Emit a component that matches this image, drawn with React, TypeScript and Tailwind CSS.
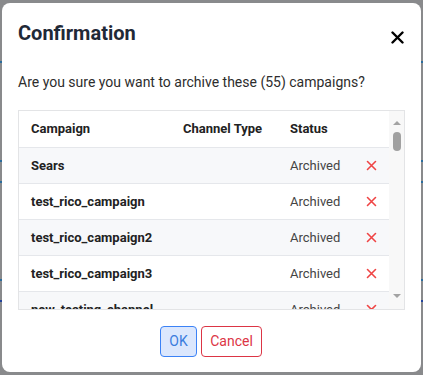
import React from 'react';

const campaigns = [
  'Sears',
  'test_rico_campaign',
  'test_rico_campaign2',
  'test_rico_campaign3',
  'new_testing_channel',
];

// Thin red x used to remove a campaign from the list
const RemoveIcon = () => (
  <svg width="11" height="11" viewBox="0 0 11 11" className="text-[#ef4444]">
    <path d="M1.5 1.5 L9.5 9.5 M9.5 1.5 L1.5 9.5" stroke="currentColor" strokeWidth="1.6" strokeLinecap="round" />
  </svg>
);

export default function App() {
  return (
    <div
      className="relative h-[375px] w-[423px] overflow-hidden bg-[#898a8c]"
      style={{ fontFamily: 'Roboto, "Liberation Sans", Arial, sans-serif' }}
    >
      {/* dimmed page behind the overlay */}
      <div className="absolute left-0 right-0 top-[61px] h-[2px] bg-[#2b6c9c]" />
      <div className="absolute left-0 right-0 top-[160px] h-[2px] bg-[#2b6c9c]" />
      <div className="absolute left-0 right-0 top-[181px] h-[2px] bg-[#2b6c9c]" />
      <div className="absolute left-0 right-0 top-[279px] h-[2px] bg-[#2b6c9c]" />
      <div className="absolute left-0 right-0 top-[300px] h-[2px] bg-[#23439a]" />

      {/* Modal */}
      <div className="absolute left-[2px] top-[3px] flex h-[369px] w-[419px] flex-col rounded-lg bg-white px-4 pt-4 pb-4">
        <div className="flex items-center justify-between">
          <h2 className="text-[20px] leading-[28px] font-bold text-[#1f2937]">Confirmation</h2>
          <button className="mt-[9px] mr-[1px] text-black">
            <svg width="13" height="13" viewBox="0 0 13 13">
              <path d="M1.5 1.5 L11.5 11.5 M11.5 1.5 L1.5 11.5" stroke="currentColor" strokeWidth="2.4" strokeLinecap="round" />
            </svg>
          </button>
        </div>

        <p className="mt-[25px] text-[14px] leading-[20px] text-[#2d2d2d]">
          Are you sure you want to archive these (55) campaigns?
        </p>

        {/* Campaign table */}
        <div className="mt-[18px] flex h-[200px] border border-[#e3e4e6]">
          <div className="flex-1 overflow-hidden">
            <div className="grid h-[37px] grid-cols-[152px_107px_70px_22px] items-center border-b border-[#e5e7eb] pl-[12px] text-[13px] font-bold text-[#222]">
              <span>Campaign</span>
              <span>Channel Type</span>
              <span>Status</span>
              <span />
            </div>
            {campaigns.map((name, i) => (
              <div
                key={name}
                className={`grid h-[36px] grid-cols-[152px_107px_70px_22px] items-center border-b border-[#e5e7eb] pl-[12px] text-[13px] ${
                  i % 2 === 0 ? 'bg-[#f7f8fa]' : 'bg-white'
                }`}
              >
                <span className="font-bold text-[#222]">{name}</span>
                <span />
                <span className="text-[#444]">Archived</span>
                <span className="flex justify-center">
                  <RemoveIcon />
                </span>
              </div>
            ))}
          </div>

          {/* scrollbar */}
          <div className="flex w-[15px] flex-col items-center bg-[#f8f8f8] pt-[10px] pb-[11px]">
            <div className="h-0 w-0 border-x-[4px] border-b-[4px] border-x-transparent border-b-[#a3a3a3]" />
            <div className="mt-[7px] h-[19px] w-[8px] rounded-full bg-[#a1a1a1]" />
            <div className="flex-1" />
            <div className="h-0 w-0 border-x-[4px] border-t-[4px] border-x-transparent border-t-[#a3a3a3]" />
          </div>
        </div>

        <div className="mt-[16px] flex justify-center gap-[4px] pr-[1px]">
          <button className="h-[31px] w-[37px] rounded-[4px] border border-[#3b82f6] bg-[#dbe7fd] text-[14px] text-[#3b7ddd]">
            OK
          </button>
          <button className="h-[31px] w-[61px] rounded-[4px] border border-[#dc3545] bg-white text-[14px] text-[#dc3545]">
            Cancel
          </button>
        </div>
      </div>
    </div>
  );
}
